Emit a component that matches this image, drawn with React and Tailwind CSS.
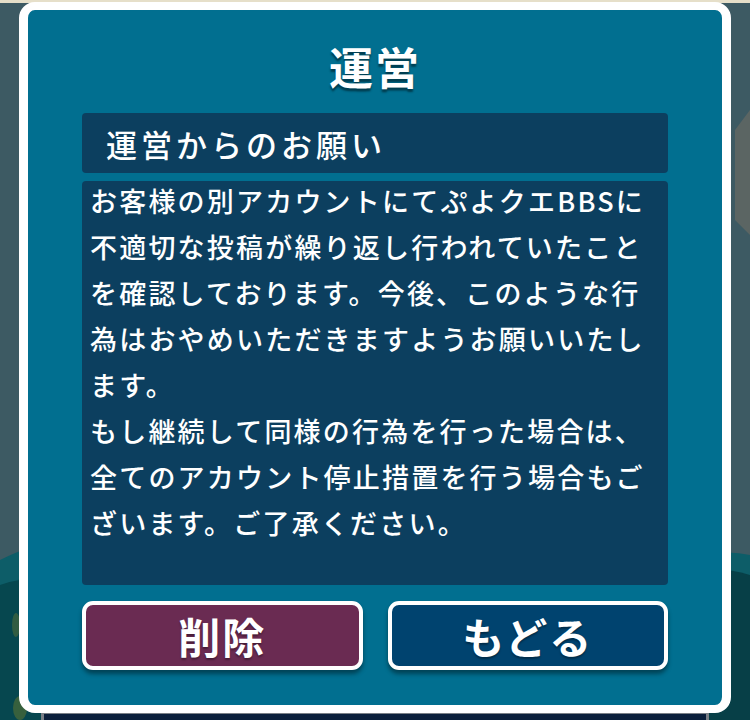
import React from 'react';

const bodyLines = [
  'お客様の別アカウントにてぷよクエBBSに',
  '不適切な投稿が繰り返し行われていたこと',
  'を確認しております。今後、このような行',
  '為はおやめいただきますようお願いいたし',
  'ます。',
  'もし継続して同様の行為を行った場合は、',
  '全てのアカウント停止措置を行う場合もご',
  'ざいます。ご了承ください。',
];

const font = { fontFamily: '"Noto Sans CJK JP", "Noto Sans", sans-serif' };

// scenery behind the dialog
const Backdrop = () => (
  <svg className="absolute inset-0" width="750" height="720" viewBox="0 0 750 720">
    <rect width="750" height="720" fill="#3d5a63" />
    <rect width="750" height="3" fill="#e6dfc9" />
    <path d="M735 130 L750 110 L750 235 L735 220 Z" fill="#5b6563" />
    <path d="M0 560 Q 40 540 60 545 L60 720 L0 720 Z" fill="#0d5d68" />
    <path d="M0 585 Q 30 575 60 578 L60 720 L0 720 Z" fill="#06474f" />
    <path d="M690 560 Q 720 548 750 555 L750 720 L690 720 Z" fill="#0d5d68" />
    <path d="M690 572 Q 720 566 750 575 L750 720 L690 720 Z" fill="#073f47" />
    <ellipse cx="16" cy="625" rx="4" ry="12" fill="#4f6a3a" opacity="0.6" />
    <ellipse cx="20" cy="708" rx="7" ry="12" fill="#4d6b36" opacity="0.7" />
  </svg>
);

const DialogButton = ({ label, color }) => (
  <button
    className={`flex h-[69px] items-center justify-center rounded-[11px] border-[4px] border-white ${color} shadow-[0_4px_4px_rgba(0,0,0,0.4)]`}
  >
    <span
      className="text-[42px] font-bold leading-none text-white tracking-[2px] [text-shadow:0_2px_2px_rgba(0,0,0,0.35)]"
      style={font}
    >
      {label}
    </span>
  </button>
);

export default function App() {
  return (
    <div className="relative h-[720px] w-[750px] overflow-hidden" style={font}>
      <Backdrop />
      <div className="relative flex flex-col items-center pt-[2px]">
        <div className="w-[712px] rounded-[16px] border-x-[9px] border-y-[8px] border-white bg-[#016f90]">
          <div className="flex flex-col px-[54px] pt-[30px] pb-[35px]">
            <h1 className="text-center text-[44px] font-bold leading-[52px] text-white tracking-[2px] [text-shadow:0_3px_2px_rgba(0,0,0,0.45)]">
              運営
            </h1>
            <div className="mt-[21px] flex h-[60px] items-center rounded-[4px] bg-[#0c3f5f] pl-[24px]">
              <span className="text-[31px] font-medium leading-none text-white tracking-[4px]">運営からのお願い</span>
            </div>
            <div className="mt-[8px] h-[404px] rounded-[4px] bg-[#0c3f5f] pl-[8px]">
              <div className="mt-[-3px] text-[27px] font-medium leading-[46px] text-white tracking-[2.2px]">
                {bodyLines.map((line) => (
                  <div key={line} className="whitespace-nowrap">
                    {line}
                  </div>
                ))}
              </div>
            </div>
            <div className="mt-[16px] grid grid-cols-2 gap-[25px]">
              <DialogButton label="削除" color="bg-[#6a2b52]" />
              <DialogButton label="もどる" color="bg-[#00436f]" />
            </div>
          </div>
        </div>
        <div className="h-[10px] w-[668px] border-x-[3px] border-t-[1px] border-[#7a7f86] bg-[#0b1f3b]" />
      </div>
    </div>
  );
}
